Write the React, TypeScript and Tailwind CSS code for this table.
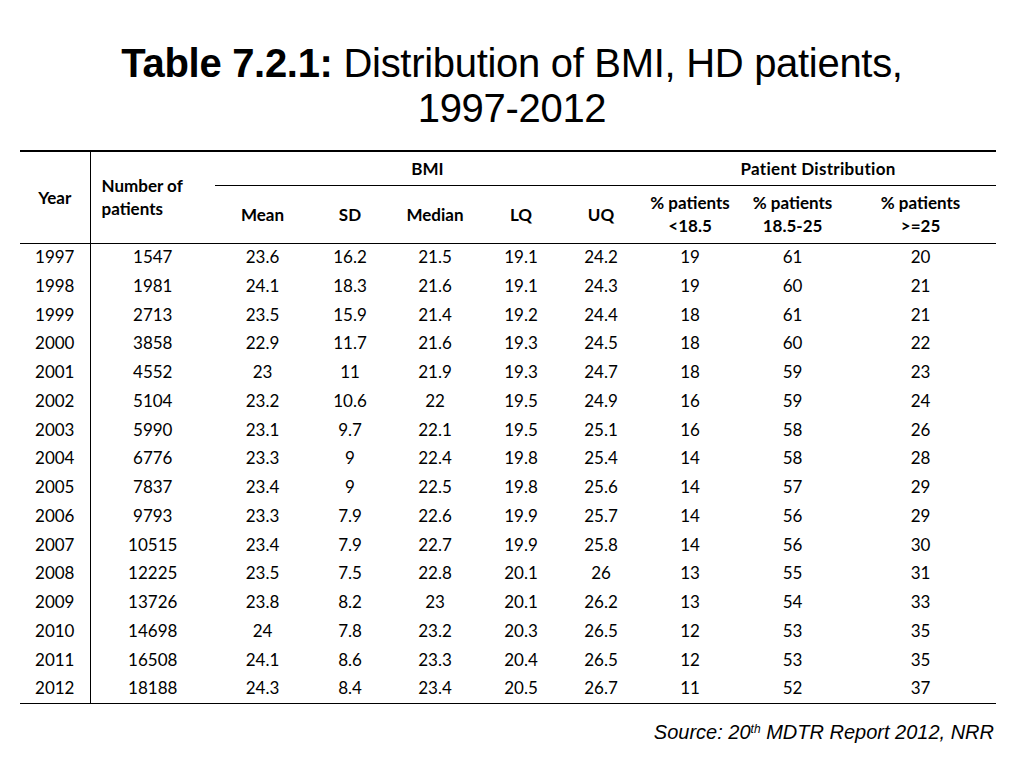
const rows: (string | number)[][] = [
  ["1997", "1547", "23.6", "16.2", "21.5", "19.1", "24.2", "19", "61", "20"],
  ["1998", "1981", "24.1", "18.3", "21.6", "19.1", "24.3", "19", "60", "21"],
  ["1999", "2713", "23.5", "15.9", "21.4", "19.2", "24.4", "18", "61", "21"],
  ["2000", "3858", "22.9", "11.7", "21.6", "19.3", "24.5", "18", "60", "22"],
  ["2001", "4552", "23", "11", "21.9", "19.3", "24.7", "18", "59", "23"],
  ["2002", "5104", "23.2", "10.6", "22", "19.5", "24.9", "16", "59", "24"],
  ["2003", "5990", "23.1", "9.7", "22.1", "19.5", "25.1", "16", "58", "26"],
  ["2004", "6776", "23.3", "9", "22.4", "19.8", "25.4", "14", "58", "28"],
  ["2005", "7837", "23.4", "9", "22.5", "19.8", "25.6", "14", "57", "29"],
  ["2006", "9793", "23.3", "7.9", "22.6", "19.9", "25.7", "14", "56", "29"],
  ["2007", "10515", "23.4", "7.9", "22.7", "19.9", "25.8", "14", "56", "30"],
  ["2008", "12225", "23.5", "7.5", "22.8", "20.1", "26", "13", "55", "31"],
  ["2009", "13726", "23.8", "8.2", "23", "20.1", "26.2", "13", "54", "33"],
  ["2010", "14698", "24", "7.8", "23.2", "20.3", "26.5", "12", "53", "35"],
  ["2011", "16508", "24.1", "8.6", "23.3", "20.4", "26.5", "12", "53", "35"],
  ["2012", "18188", "24.3", "8.4", "23.4", "20.5", "26.7", "11", "52", "37"],
];

const widths = [70, 125, 95, 80, 90, 82, 78, 100, 105, 151];

const App = () => {
  return (
    <div className="w-[1024px] h-[768px] bg-white text-black relative overflow-hidden">
      {/* Title */}
      <div className="pt-[41px] h-[150px] text-center font-['Liberation_Sans',Arial,sans-serif] text-[40px] leading-[45px] tracking-[-0.3px]">
        <div>
          <span className="font-bold">Table 7.2.1:</span> Distribution of BMI, HD patients,
        </div>
        <div>1997-2012</div>
      </div>

      {/* Table */}
      <div className="px-[20px] font-['Lato','Open_Sans',sans-serif]">
        <table className="w-[976px] table-fixed border-collapse">
          <colgroup>
            {widths.map((w, i) => (
              <col key={i} style={{ width: w }} />
            ))}
          </colgroup>
          <thead className="font-bold text-[17px] leading-[23px]">
            <tr className="border-t-2 border-black h-[34px]">
              <th rowSpan={2} className="border-r-[1.5px] border-black text-center font-bold">Year</th>
              <th rowSpan={2} className="text-left pl-[11px] font-bold leading-[23px]">
                Number of
                <br />
                patients
              </th>
              <th colSpan={5} className="border-b-[1.5px] border-black text-center font-bold pt-[1px]">BMI</th>
              <th colSpan={3} className="border-b-[1.5px] border-black text-center font-bold pt-[1px] tracking-[0.3px]">Patient Distribution</th>
            </tr>
            <tr className="h-[58px]">
              <th className="font-bold">Mean</th>
              <th className="font-bold">SD</th>
              <th className="font-bold">Median</th>
              <th className="font-bold">LQ</th>
              <th className="font-bold">UQ</th>
              <th className="font-bold">
                % patients
                <br />
                &lt;18.5
              </th>
              <th className="font-bold">
                % patients
                <br />
                18.5-25
              </th>
              <th className="font-bold">
                % patients
                <br />
                &gt;=25
              </th>
            </tr>
            <tr>
              <th colSpan={10} className="p-0 border-t-[1.5px] border-black h-0"></th>
            </tr>
          </thead>
          <tbody className="text-[17px]">
            {rows.map((r, i) => (
              <tr key={i} className={`h-[28.75px] ${i === rows.length - 1 ? "border-b-[1.5px] border-black" : ""}`}>
                {r.map((c, j) => (
                  <td key={j} className={`text-center p-0 pb-[2px] ${j === 0 ? "border-r-[1.5px] border-black" : ""}`}>
                    {c}
                  </td>
                ))}
              </tr>
            ))}
          </tbody>
        </table>
      </div>

      {/* Source */}
      <div className="absolute right-[30px] top-[718px] italic text-[20px] leading-[28px] font-['Liberation_Sans',Arial,sans-serif]">
        Source: 20<sup className="text-[12px]">th</sup> MDTR Report 2012, NRR
      </div>
    </div>
  );
};

export default App;
